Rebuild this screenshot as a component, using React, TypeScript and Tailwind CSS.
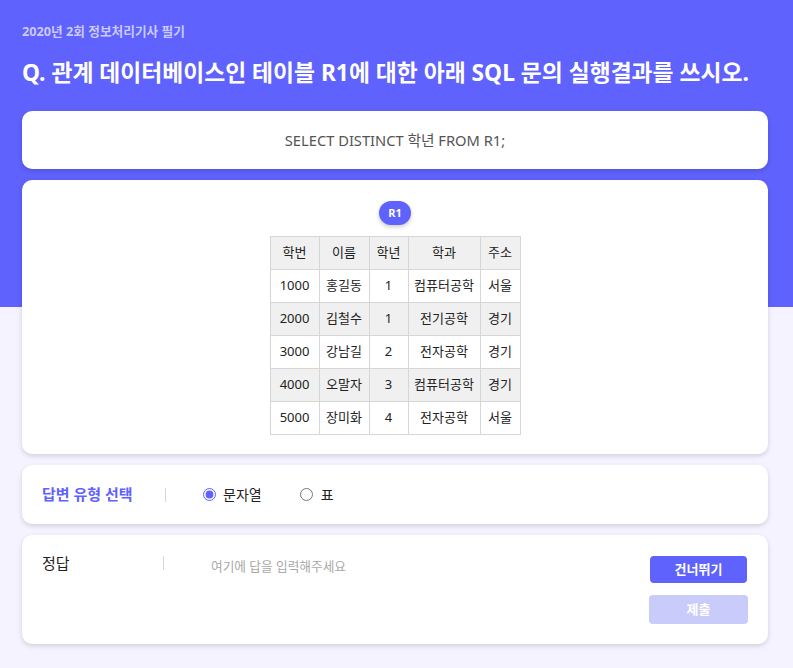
import { useState } from "react";

const rows = [
    ["1000", "홍길동", "1", "컴퓨터공학", "서울"],
    ["2000", "김철수", "1", "전기공학", "경기"],
    ["3000", "강남길", "2", "전자공학", "경기"],
    ["4000", "오말자", "3", "컴퓨터공학", "경기"],
    ["5000", "장미화", "4", "전자공학", "서울"],
];

const colWidths = ["w-[49px]", "w-[50px]", "w-[39px]", "w-[72px]", "w-[40px]"];

export default function App() {
    const [type, setType] = useState("text");
    const [answer, setAnswer] = useState("");

    return (
        <main className="min-h-screen w-full bg-[linear-gradient(to_bottom,#5f62fd_307px,#f4f3ff_307px)] pl-[22px] pr-[25px] pt-[23px] pb-6 font-['Noto_Sans','Noto_Sans_CJK_KR',sans-serif]">
            <div className="text-[12.7px] font-bold leading-[16px] text-[#c9caff]">2020년 2회 정보처리기사 필기</div>
            <h1 className="mt-[19px] text-[22.8px] font-bold leading-[30px] text-white">
                Q. 관계 데이터베이스인 테이블 R1에 대한 아래 SQL 문의 실행결과를 쓰시오.
            </h1>

            <div className="mt-[23px] flex flex-col gap-[11px]">
                <section className="flex h-[58px] items-center justify-center rounded-[10px] bg-white shadow-[0_2px_5px_rgba(0,0,0,0.15)]">
                    <span className="text-[14.7px] text-[#555]">SELECT DISTINCT 학년 FROM R1;</span>
                </section>

                <section className="flex flex-col items-center rounded-[10px] bg-white pt-[21px] pb-[19px] shadow-[0_2px_5px_rgba(0,0,0,0.15)]">
                    <div className="flex h-[24px] w-[32px] items-center justify-center rounded-full bg-[#5f62fd] text-[11px] font-bold text-white shadow-[0_2px_4px_rgba(0,0,0,0.2)]">
                        R1
                    </div>
                    <table className="mt-[11px] border-collapse text-[13px] text-[#222]">
                        <thead>
                            <tr className="bg-[#f0f0f0]">
                                {["학번", "이름", "학년", "학과", "주소"].map((h, i) => (
                                    <th key={h} className={`${colWidths[i]} h-[33px] border border-[#d6d6d6] p-0 text-center font-normal`}>{h}</th>
                                ))}
                            </tr>
                        </thead>
                        <tbody>
                            {rows.map((r, ri) => (
                                <tr key={r[0]} className={ri % 2 === 1 ? "bg-[#f0f0f0]" : "bg-white"}>
                                    {r.map((c, ci) => (
                                        <td key={ci} className={`${colWidths[ci]} h-[33px] border border-[#d6d6d6] p-0 text-center`}>{c}</td>
                                    ))}
                                </tr>
                            ))}
                        </tbody>
                    </table>
                </section>

                <section className="flex h-[59px] items-center rounded-[10px] bg-white pl-[20px] shadow-[0_2px_5px_rgba(0,0,0,0.15)]">
                    <span className="w-[123px] text-[15px] font-bold text-[#5f62fd]">답변 유형 선택</span>
                    <span className="h-[14px] w-px bg-[#d8d8d8]" />
                    <label className="ml-[37px] flex items-center gap-[7px] text-[14px] text-[#222]">
                        <input type="radio" name="type" checked={type === "text"} onChange={() => setType("text")} className="m-0 h-[13px] w-[13px] accent-[#5f62fd]" />
                        문자열
                    </label>
                    <label className="ml-[38px] flex items-center gap-[8px] text-[14px] text-[#222]">
                        <input type="radio" name="type" checked={type === "table"} onChange={() => setType("table")} className="m-0 h-[13px] w-[13px] accent-[#5f62fd]" />
                        표
                    </label>
                </section>

                <section className="flex h-[109px] rounded-[10px] bg-white pl-[20px] pr-[20px] pt-[18px] shadow-[0_2px_5px_rgba(0,0,0,0.15)]">
                    <span className="w-[121px] text-[15px] leading-[20px] text-[#222]">정답</span>
                    <span className="mt-[3px] h-[14px] w-px bg-[#d8d8d8]" />
                    <textarea
                        value={answer}
                        onChange={(e) => setAnswer(e.target.value)}
                        placeholder="여기에 답을 입력해주세요"
                        className="ml-[47px] mt-[4px] h-[60px] flex-1 resize-none text-[12.7px] leading-[18px] text-[#333] outline-none placeholder:text-[#a8a8a8]"
                    />
                    <div className="flex flex-col items-center gap-[12px] pt-[3px]">
                        <button className="h-[27px] w-[97px] rounded-[4px] bg-[#5f62fd] text-[13px] font-bold text-white">건너뛰기</button>
                        <button className="h-[29px] w-[99px] rounded-[4px] bg-[#c9ccfb] text-[13px] font-bold text-white" disabled={!answer}>제출</button>
                    </div>
                </section>
            </div>
        </main>
    );
}
